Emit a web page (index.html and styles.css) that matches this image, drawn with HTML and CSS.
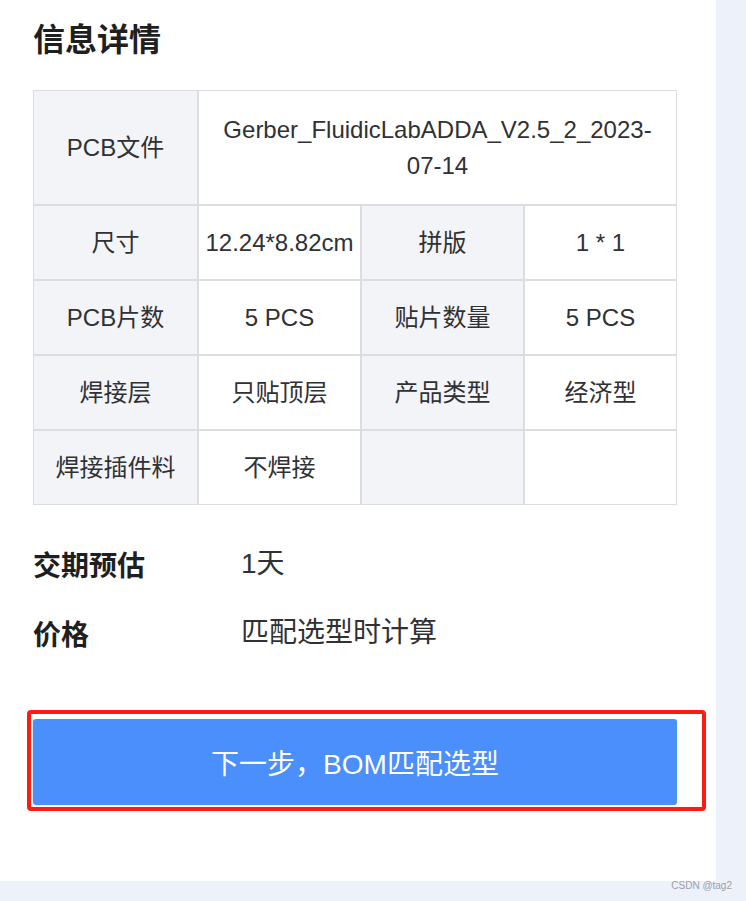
FILE: index.html
```html
<!DOCTYPE html>
<html lang="zh-CN">
<head>
<meta charset="utf-8">
<title>信息详情</title>
<link rel="stylesheet" href="styles.css">
</head>
<body>
<div class="page">
  <main class="panel">
    <h2 class="title">信息详情</h2>
    <table class="info">
      <colgroup>
        <col class="c1"><col class="c2"><col class="c3"><col class="c4">
      </colgroup>
      <tr class="tall">
        <td class="lbl">PCB文件</td>
        <td class="val wide" colspan="3">Gerber_FluidicLabADDA_V2.5_2_2023-07-14</td>
      </tr>
      <tr>
        <td class="lbl">尺寸</td>
        <td class="val">12.24*8.82cm</td>
        <td class="lbl">拼版</td>
        <td class="val">1 * 1</td>
      </tr>
      <tr>
        <td class="lbl">PCB片数</td>
        <td class="val">5 PCS</td>
        <td class="lbl">贴片数量</td>
        <td class="val">5 PCS</td>
      </tr>
      <tr>
        <td class="lbl">焊接层</td>
        <td class="val">只贴顶层</td>
        <td class="lbl">产品类型</td>
        <td class="val">经济型</td>
      </tr>
      <tr>
        <td class="lbl">焊接插件料</td>
        <td class="val">不焊接</td>
        <td class="lbl"></td>
        <td class="val"></td>
      </tr>
    </table>
    <div class="summary">
      <div class="srow"><span class="skey">交期预估</span><span class="sval">1天</span></div>
      <div class="srow"><span class="skey">价格</span><span class="sval">匹配选型时计算</span></div>
    </div>
    <div class="highlight">
      <button class="next">下一步，BOM匹配选型</button>
    </div>
  </main>
  <div class="side"></div>
</div>
<div class="bottom"></div>
<span class="watermark">CSDN @tag2</span>
</body>
</html>
```
FILE: styles.css
```css
html, body {
  margin: 0;
  padding: 0;
}
body {
  background: #eef2f9;
  font-family: "Liberation Sans", "Noto Sans CJK SC", sans-serif;
  color: #303133;
  width: 746px;
  height: 901px;
  overflow: hidden;
  position: relative;
}
.page {
  display: flex;
  height: 881px;
}
.panel {
  width: 716px;
  height: 881px;
  background: #ffffff;
  box-sizing: border-box;
  padding: 15px 0 0 33px;
}
.side {
  flex: 1;
  background: #edf1f9;
}
.bottom {
  height: 20px;
  background: #edf1f9;
}
.title {
  margin: 0;
  font-size: 32px;
  line-height: 44px;
  font-weight: 700;
  color: #1f1f1f;
  font-family: "Noto Sans CJK SC", "Liberation Sans", sans-serif;
}
.info {
  margin-top: 31px;
  width: 644px;
  table-layout: fixed;
  border-collapse: separate;
  border-spacing: 0;
  font-size: 24px;
  line-height: 36px;
}
.c1 { width: 165px; }
.c2 { width: 163px; }
.c3 { width: 163px; }
.c4 { width: 153px; }
.info tr { height: 75px; }
.info tr.tall { height: 115px; }
.info td {
  border: 1px solid #dcdde0;
  padding: 0 6px;
  text-align: center;
  vertical-align: middle;
  color: #303133;
}
.info td.wide {
  padding: 0 14px;
}
.info td.lbl {
  background: #f3f4f8;
}
.info td.val {
  background: #ffffff;
}
.summary {
  margin-top: 39px;
  display: flex;
  flex-direction: column;
  gap: 29px;
}
.srow {
  display: flex;
  font-size: 28px;
  line-height: 40px;
}
.skey {
  width: 208px;
  font-weight: 700;
  color: #1f1f1f;
  font-family: "Noto Sans CJK SC", "Liberation Sans", sans-serif;
}
.sval {
  color: #303133;
}
.highlight {
  margin-top: 57px;
  margin-left: -6px;
  width: 679px;
  box-sizing: border-box;
  border: 4px solid #ff1a12;
  border-radius: 4px;
  padding: 5px 25px 2px 2px;
}
.next {
  display: block;
  width: 644px;
  height: 86px;
  border: none;
  border-radius: 3px;
  background: #4a8ffb;
  color: #ffffff;
  font-family: "Liberation Sans", "Noto Sans CJK SC", sans-serif;
  font-size: 28px;
  padding: 0;
  cursor: pointer;
}
.watermark {
  position: absolute;
  right: 14px;
  bottom: 9px;
  font-size: 10px;
  line-height: 12px;
  color: #9a9ea6;
  font-family: "Liberation Sans", sans-serif;
}
```
